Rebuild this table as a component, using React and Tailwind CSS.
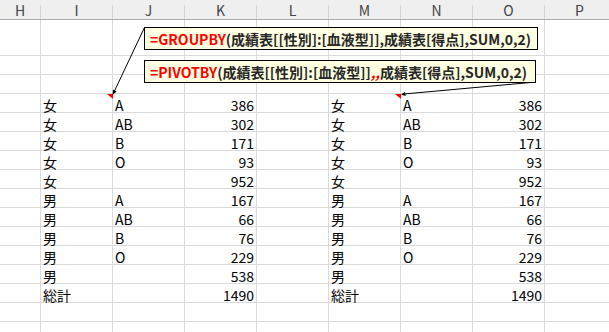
import React from "react";

const COLS = [
  { l: "H", w: 41 },
  { l: "I", w: 72 },
  { l: "J", w: 72 },
  { l: "K", w: 72 },
  { l: "L", w: 72 },
  { l: "M", w: 72 },
  { l: "N", w: 72 },
  { l: "O", w: 72 },
  { l: "P", w: 70 },
];

const DATA = [
  ["女", "A", "386"],
  ["女", "AB", "302"],
  ["女", "B", "171"],
  ["女", "O", "93"],
  ["女", "", "952"],
  ["男", "A", "167"],
  ["男", "AB", "66"],
  ["男", "B", "76"],
  ["男", "O", "229"],
  ["男", "", "538"],
  ["総計", "", "1490"],
];

const font = { fontFamily: '"Noto Sans CJK JP", "Noto Sans", sans-serif' };

function Cell({ w, children, align = "left" }) {
  return (
    <div
      className={`h-full shrink-0 flex items-center border-r border-[#dadada] ${
        align === "right" ? "justify-end pr-[2px]" : "pl-[2px]"
      }`}
      style={{ width: w }}
    >
      <span className="text-[14px] leading-[18px] pt-[3px] text-black whitespace-nowrap">{children}</span>
    </div>
  );
}

function Row({ h, cells = [] }) {
  const map = {};
  cells.forEach((c) => (map[c.i] = c));
  return (
    <div className="flex border-b border-[#dadada] box-border" style={{ height: h }}>
      {COLS.map((c, i) => (
        <Cell key={i} w={c.w} align={map[i] ? map[i].align : "left"}>
          {map[i] ? map[i].t : ""}
        </Cell>
      ))}
    </div>
  );
}

export default function App() {
  return (
    <div className="relative w-[609px] h-[332px] overflow-hidden bg-white" style={font}>
      {/* header */}
      <div className="flex h-[20px] bg-[#efefef] border-b border-[#ababab] box-border">
        {COLS.map((c, i) => (
          <div key={i} className="flex shrink-0 h-full" style={{ width: c.w }}>
            <div className="flex-1 flex items-center justify-center text-[14px] text-[#444] pt-[1px]">{c.l}</div>
            <div className="w-px h-[14px] self-end bg-[#d4d4d4]" />
          </div>
        ))}
      </div>
      <Row h={36} />
      <Row h={19} />
      <Row h={19} />
      {DATA.map((d, k) => (
        <Row
          key={k}
          h={19}
          cells={[
            { i: 1, t: d[0] },
            { i: 2, t: d[1] },
            { i: 3, t: d[2], align: "right" },
            { i: 5, t: d[0] },
            { i: 6, t: d[1] },
            { i: 7, t: d[2], align: "right" },
          ]}
        />
      ))}
      <Row h={19} />
      <Row h={19} />

      <svg className="absolute left-0 top-0 pointer-events-none" width="609" height="332">
        <polygon points="107,94 113,94 113,99" fill="#ff0000" />
        <polygon points="395,94 401,94 401,99" fill="#ff0000" />
        <line x1="144.5" y1="27.5" x2="114" y2="92" stroke="#000" strokeWidth="1" />
        <polygon points="112.5,95 113,89.5 116.5,91.5" fill="#000" />
        <line x1="536" y1="82" x2="404" y2="94" stroke="#000" strokeWidth="1" />
        <polygon points="401,94.5 405,92 405.5,96" fill="#000" />
      </svg>

      <div className="absolute left-[144px] top-[27px] w-[394px] h-[23px] border border-black bg-[#ffffe1] flex items-center pl-[5px] whitespace-nowrap">
        <span className="text-[14px] font-bold leading-none text-[#262626]">
          <span className="text-[#ff0000]">=GROUPBY</span>(成績表[[性別]:[血液型]],成績表[得点],SUM,0,2)
        </span>
      </div>
      <div className="absolute left-[144px] top-[60px] w-[392px] h-[23px] border border-black bg-[#ffffe1] flex items-center pl-[5px] whitespace-nowrap">
        <span className="text-[14px] font-bold leading-none text-[#262626]">
          <span className="text-[#ff0000]">=PIVOTBY</span>(成績表[[性別]:[血液型]]<span className="text-[#ff0000] italic">,,</span>成績表[得点],SUM,0,2)
        </span>
      </div>
    </div>
  );
}
